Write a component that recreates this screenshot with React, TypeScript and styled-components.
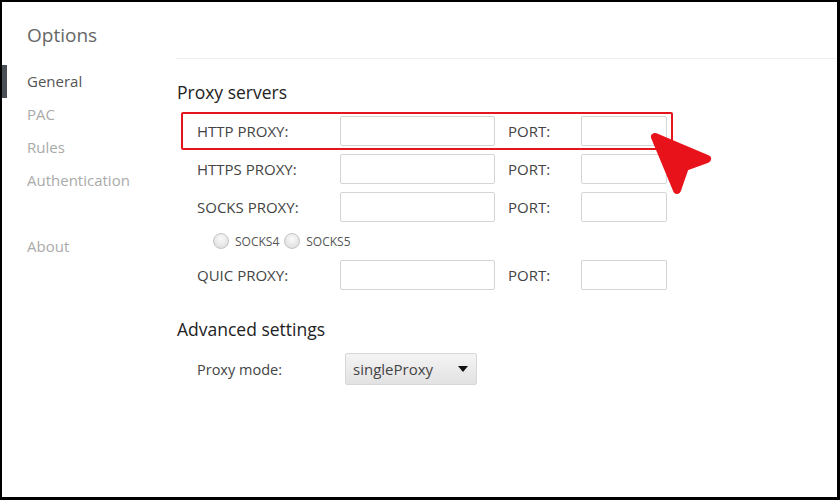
import styled, { createGlobalStyle } from 'styled-components';

const GlobalStyle = createGlobalStyle`
  html, body {
    margin: 0;
    padding: 0;
    background: #000;
  }
  * {
    box-sizing: border-box;
  }
`;

const navItems = [
  { label: 'General', active: true },
  { label: 'PAC' },
  { label: 'Rules' },
  { label: 'Authentication' },
  { label: '' },
  { label: 'About' },
];

const proxyRows = [
  { label: 'HTTP PROXY:', highlighted: true },
  { label: 'HTTPS PROXY:' },
  { label: 'SOCKS PROXY:' },
];

export default function App() {
  return (
    <>
      <GlobalStyle />
      <Frame>
        <Sidebar>
          <Title>Options</Title>
          <Nav>
            {navItems.map((item, i) => (
              <NavItem key={i} $active={item.active}>
                {item.label}
              </NavItem>
            ))}
          </Nav>
        </Sidebar>

        <Main>
          <Header />

          <SectionTitle $top={21}>Proxy servers</SectionTitle>
          <Rows>
            {proxyRows.map((row) => (
              <FieldRow key={row.label} $highlighted={row.highlighted}>
                <Label>{row.label}</Label>
                <HostInput type="text" />
                <PortLabel>PORT:</PortLabel>
                <PortInput type="text" />
              </FieldRow>
            ))}
            <RadioRow>
              <RadioOption>
                <Radio type="radio" name="socks" />
                SOCKS4
              </RadioOption>
              <RadioOption>
                <Radio type="radio" name="socks" />
                SOCKS5
              </RadioOption>
            </RadioRow>
            <FieldRow>
              <Label>QUIC PROXY:</Label>
              <HostInput type="text" />
              <PortLabel>PORT:</PortLabel>
              <PortInput type="text" />
            </FieldRow>
          </Rows>

          <SectionTitle $top={23}>Advanced settings</SectionTitle>
          <ModeRow>
            <ModeLabel>Proxy mode:</ModeLabel>
            <SelectWrap>
              <Select defaultValue="singleProxy">
                <option value="singleProxy">singleProxy</option>
              </Select>
              <Caret viewBox="0 0 10 6">
                <path d="M0 0h10L5 6z" />
              </Caret>
            </SelectWrap>
          </ModeRow>
        </Main>

        <Pointer viewBox="0 0 80 80">
          <polygon points="17,15 69,37 47,45 39,68" />
        </Pointer>
      </Frame>
    </>
  );
}

const Frame = styled.div`
  position: relative;
  display: flex;
  width: 840px;
  height: 500px;
  background: #fff;
  border: 2px solid #000;
  border-right-width: 3px;
  border-bottom-width: 3px;
  font-family: 'Open Sans', 'Noto Sans', sans-serif;
  overflow: hidden;
`;

const Sidebar = styled.div`
  width: 174px;
  flex-shrink: 0;
  display: flex;
  flex-direction: column;
`;

const Title = styled.div`
  padding: 20px 0 0 25px;
  height: 63px;
  font-size: 19px;
  line-height: 26px;
  color: #666;
`;

const Nav = styled.div`
  display: flex;
  flex-direction: column;
`;

const NavItem = styled.div<{ $active?: boolean }>`
  height: 33px;
  line-height: 33px;
  padding-left: 20px;
  font-size: 15px;
  color: ${(p) => (p.$active ? '#555' : '#aaa')};
  border-left: 5px solid ${(p) => (p.$active ? '#4a4e55' : 'transparent')};
`;

const Main = styled.div`
  flex: 1;
  display: flex;
  flex-direction: column;
`;

const Header = styled.div`
  height: 57px;
  border-bottom: 1px solid #efefef;
`;

const SectionTitle = styled.div<{ $top: number }>`
  margin: ${(p) => p.$top}px 0 0 1px;
  font-size: 17.5px;
  line-height: 24px;
  color: #222;
`;

const Rows = styled.div`
  display: flex;
  flex-direction: column;
  margin-top: 8px;
  margin-left: 5px;
`;

const FieldRow = styled.div<{ $highlighted?: boolean }>`
  display: flex;
  align-items: center;
  width: 492px;
  height: 38px;
  padding: 0 4px 0 14px;
  border: 2px solid ${(p) => (p.$highlighted ? '#e3161d' : 'transparent')};
  border-radius: 2px;
`;

const Label = styled.div`
  width: 143px;
  font-size: 15px;
  color: #444;
`;

const TextBox = styled.input`
  height: 30px;
  border: 1px solid #d4d4d4;
  border-radius: 2px;
  background: #fff;
  outline: none;
`;

const HostInput = styled(TextBox)`
  width: 155px;
`;

const PortInput = styled(TextBox)`
  width: 86px;
`;

const PortLabel = styled.div`
  width: 73px;
  margin-left: 13px;
  font-size: 15px;
  color: #444;
`;

const RadioRow = styled.div`
  display: flex;
  align-items: center;
  gap: 5px;
  height: 30px;
  padding-left: 32px;
`;

const RadioOption = styled.label`
  display: flex;
  align-items: center;
  gap: 6px;
  font-size: 12px;
  color: #555;
`;

const Radio = styled.input`
  appearance: none;
  margin: 0;
  width: 16px;
  height: 16px;
  border-radius: 50%;
  border: 1px solid #c4c4c4;
  background: radial-gradient(circle at 50% 35%, #fafafa 0%, #e6e6e6 60%, #d6d6d6 100%);
`;

const ModeRow = styled.div`
  display: flex;
  align-items: center;
  margin: 12px 0 0 21px;
`;

const ModeLabel = styled.div`
  width: 148px;
  font-size: 14.5px;
  color: #444;
`;

const SelectWrap = styled.div`
  position: relative;
  width: 132px;
  height: 32px;
`;

const Select = styled.select`
  appearance: none;
  width: 100%;
  height: 100%;
  padding: 0 0 0 7px;
  border: 1px solid #d8d8d8;
  border-radius: 2px;
  background: linear-gradient(#f4f4f4, #e2e2e2);
  font-family: inherit;
  font-size: 15px;
  color: #444;
  outline: none;
`;

const Caret = styled.svg`
  position: absolute;
  right: 9px;
  top: 13px;
  width: 10px;
  height: 6px;
  fill: #111;
  pointer-events: none;
`;

const Pointer = styled.svg`
  position: absolute;
  left: 636px;
  top: 120px;
  width: 80px;
  height: 80px;
  fill: #e8121a;
  stroke: #e8121a;
  stroke-width: 8;
  stroke-linejoin: round;
`;
